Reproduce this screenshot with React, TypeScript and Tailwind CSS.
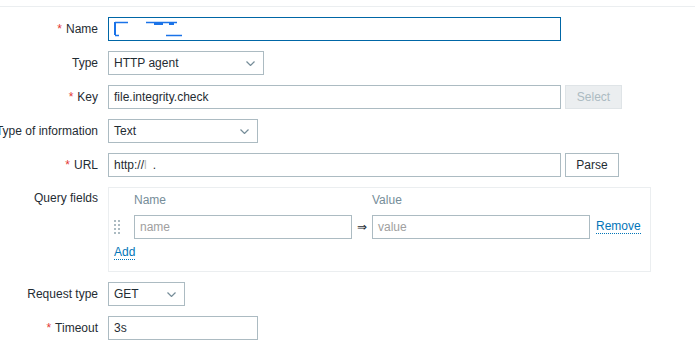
import React from 'react';

const Req = () => <span className="text-[#e33734] mr-[4px]">*</span>;

function Chevron() {
    return (
        <svg className="w-[9px] h-[5px]" viewBox="0 0 9 5" fill="none" stroke="#768d99" strokeWidth={1.2}>
            <path d="M0.5 0.5l4 4 4-4" />
        </svg>
    );
}

function Row({ label, required, children, top }: { label: string; required?: boolean; children: React.ReactNode; top?: boolean }) {
    return (
        <div className={`flex ${top ? 'items-start' : 'items-center'} gap-[10px]`}>
            <div className={`w-[98px] shrink-0 flex justify-end whitespace-nowrap ${top ? 'pt-[4px]' : ''}`}>
                {required && <Req />}
                {label}
            </div>
            {children}
        </div>
    );
}

function Box({ w, children, focus }: { w: string; children?: React.ReactNode; focus?: boolean }) {
    return (
        <div className={`${w} h-[24px] border ${focus ? 'border-[#0066a6]' : 'border-[#acbbc2]'} bg-white pl-[5px] flex items-center`}>
            {children}
        </div>
    );
}

function Select({ w, value }: { w: string; value: string }) {
    return (
        <div className={`${w} h-[24px] border border-[#acbbc2] bg-white pl-[5px] pr-[8px] flex items-center justify-between`}>
            <span>{value}</span>
            <Chevron />
        </div>
    );
}

function DragHandle() {
    return (
        <div className="grid grid-cols-2 gap-x-[2px] gap-y-[2px] w-[6px]">
            {Array.from({ length: 8 }).map((_, i) => (
                <span key={i} className="w-[2px] h-[2px] bg-[#acbbc2]" />
            ))}
        </div>
    );
}

export default function App() {
    return (
        <div className="w-[695px] h-[344px] overflow-hidden bg-white text-[12px] leading-[14px] text-[#1f2c33] font-['Liberation_Sans',Arial,sans-serif]">
            <div className="pt-[6px]">
                <div className="border-t border-[#ebeef0]" />
            </div>

            <div className="pt-[10px] flex flex-col gap-[10px]">
                {/* Name */}
                <Row label="Name" required>
                    <Box w="w-[453px]" focus>
                        <svg className="w-[70px] h-[16px]" viewBox="0 0 70 16" fill="none" stroke="#1a73e8">
                            <path d="M1 1v13" strokeWidth={2} />
                            <path d="M1 1.5h13" strokeWidth={1.5} />
                            <path d="M32 1.5h31" strokeWidth={1.5} />
                            <path d="M40 3h9M55 3h5" strokeWidth={2} />
                            <path d="M1 14.5h4" strokeWidth={1.5} />
                            <path d="M52 14.5h16" strokeWidth={1.5} />
                        </svg>
                    </Box>
                </Row>

                {/* Type */}
                <Row label="Type">
                    <Select w="w-[156px]" value="HTTP agent" />
                </Row>

                {/* Key */}
                <Row label="Key" required>
                    <div className="flex items-center gap-[4px]">
                        <Box w="w-[453px]">file.integrity.check</Box>
                        <button className="w-[57px] h-[24px] border border-[#dfe4e7] bg-[#ebeef0] text-[#acbbc2]">Select</button>
                    </div>
                </Row>

                {/* Type of information */}
                <Row label="Type of information">
                    <Select w="w-[150px]" value="Text" />
                </Row>

                {/* URL */}
                <Row label="URL" required>
                    <div className="flex items-center gap-[4px]">
                        <Box w="w-[453px]">
                            http://<span className="text-[#b8b8b8]">l</span>
                            <span className="ml-[6px]">.</span>
                        </Box>
                        <button className="w-[54px] h-[24px] border border-[#acbbc2] bg-white text-[#1f2c33]">Parse</button>
                    </div>
                </Row>

                {/* Query fields */}
                <Row label="Query fields" top>
                    <div className="w-[543px] h-[85px] border border-[#ebeef0] pl-[4px] pt-[5px]">
                        <div className="flex text-[#768d99] h-[14px]">
                            <span className="ml-[21px] w-[238px]">Name</span>
                            <span>Value</span>
                        </div>
                        <div className="flex items-center mt-[8px] h-[24px]">
                            <div className="w-[21px] pl-[1px]">
                                <DragHandle />
                            </div>
                            <div className="w-[218px] h-[24px] border border-[#acbbc2] pl-[5px] flex items-center text-[#a0a0a0]">name</div>
                            <div className="w-[20px] flex justify-center text-[#1f2c33]">⇒</div>
                            <div className="w-[218px] h-[24px] border border-[#acbbc2] pl-[5px] flex items-center text-[#a0a0a0]">value</div>
                            <span className="ml-[6px] text-[#0275b8] border-b border-dotted border-[#0275b8] leading-[13px]">Remove</span>
                        </div>
                        <div className="mt-[6px] pl-[1px]">
                            <span className="text-[#0275b8] border-b border-dotted border-[#0275b8] inline-block leading-[13px]">Add</span>
                        </div>
                    </div>
                </Row>

                {/* Request type */}
                <Row label="Request type">
                    <Select w="w-[77px]" value="GET" />
                </Row>

                {/* Timeout */}
                <Row label="Timeout" required>
                    <Box w="w-[150px]">3s</Box>
                </Row>
            </div>
        </div>
    );
}
